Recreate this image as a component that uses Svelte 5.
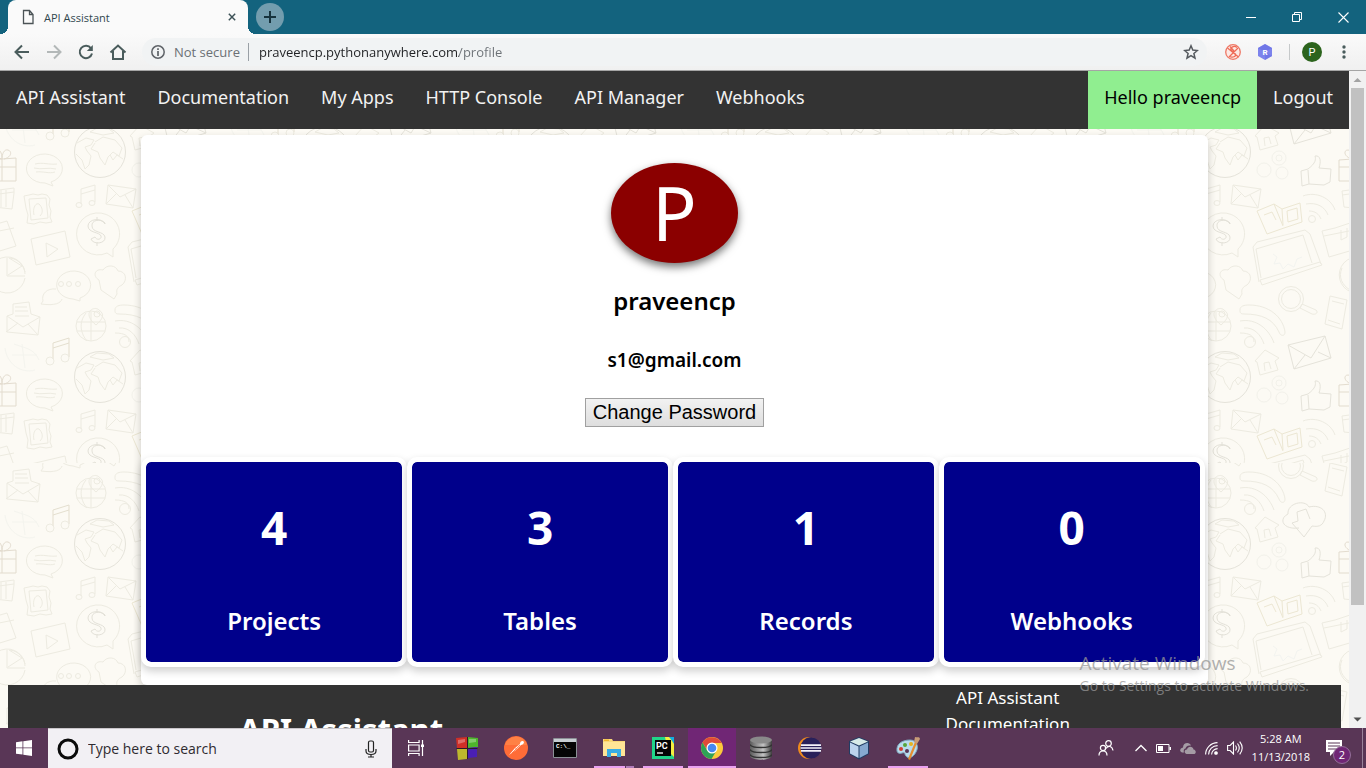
<script>
  const navLinks = ['API Assistant', 'Documentation', 'My Apps', 'HTTP Console', 'API Manager', 'Webhooks'];
  const stats = [
    { value: 4, label: 'Projects' },
    { value: 3, label: 'Tables' },
    { value: 1, label: 'Records' },
    { value: 0, label: 'Webhooks' }
  ];
  const footerLinks = ['API Assistant', 'Documentation'];
  const copies = [[0, 0], [-225, 0], [225, 0], [0, -225], [0, 225], [-225, -225], [225, -225]];
</script>

<div class="screen">
  <header class="tabs">
    <div class="tab">
      <svg class="doc" width="12" height="16" viewBox="0 0 12 16"><path d="M1.5 1.5h6l3.5 4v9H1.500z M7.500 1.500v4H11" fill="none" stroke="#4b5356" stroke-width="1.300"/></svg>
      <span>API Assistant</span>
      <button aria-label="Close tab"><svg width="8" height="8" viewBox="0 0 10 10"><path d="M1 1l8 8M9 1L1 9" stroke="#3c5156" stroke-width="1.800"/></svg></button>
      <i class="flare left"></i><i class="flare right"></i>
    </div>
    <button class="new-tab" aria-label="New tab"><svg width="12" height="12" viewBox="0 0 12 12"><path d="M6 0v12M0 6h12" stroke="#17333d" stroke-width="2"/></svg></button>
    <div class="window-buttons">
      <button aria-label="Minimize"><svg width="11" height="11" viewBox="0 0 11 11"><path d="M0 5.500h10" stroke="#fff"/></svg></button>
      <button aria-label="Restore"><svg width="11" height="11" viewBox="0 0 11 11"><path d="M.5 2.500h7v7h-7zM2.500 2.500v-2h7v7h-2" fill="none" stroke="#fff"/></svg></button>
      <button aria-label="Close"><svg width="11" height="11" viewBox="0 0 11 11"><path d="M.5.5l10 10M10.500.5l-10 10" stroke="#fff" stroke-width="1.100"/></svg></button>
    </div>
  </header>

  <div class="toolbar">
    <div class="tools">
      <button aria-label="Back"><svg width="16" height="16" viewBox="0 0 16 16"><path d="M15 8H2M8 1.500L1.500 8 8 14.500" fill="none" stroke="#4a5c5c" stroke-width="2"/></svg></button>
      <button aria-label="Forward"><svg width="16" height="16" viewBox="0 0 16 16"><path d="M1 8h13M8 1.500L14.500 8 8 14.500" fill="none" stroke="#b3b8b8" stroke-width="2"/></svg></button>
      <button aria-label="Reload"><svg width="16" height="16" viewBox="0 0 16 16"><path d="M13 4.300A6.200 6.200 0 1 0 14 9.500" fill="none" stroke="#4a5c5c" stroke-width="2"/><path d="M14.800 1v6H8.800z" fill="#4a5c5c"/></svg></button>
      <button aria-label="Home"><svg width="18" height="16" viewBox="0 0 18 16"><path d="M1.500 8.500L9 1.500l7.500 7M4 7v8h10V7" fill="none" stroke="#4a5c5c" stroke-width="2"/></svg></button>
    </div>
    <div class="address">
      <svg width="14" height="14" viewBox="0 0 14 14"><circle cx="7" cy="7" r="6.200" fill="none" stroke="#5f6368" stroke-width="1.500"/><path d="M7 6v5M7 3.200v1.700" stroke="#5f6368" stroke-width="1.700"/></svg>
      <label for="url">Not secure</label>
      <input id="url" value="praveencp.pythonanywhere.com/profile" />
      <button aria-label="Bookmark"><svg width="16" height="16" viewBox="0 0 16 16"><path d="M8 1.800l1.800 4.300 4.600.4-3.500 3 1.100 4.600L8 11.600l-4 2.500 1.100-4.600-3.500-3 4.600-.4z" fill="none" stroke="#54595e" stroke-width="1.500"/></svg></button>
    </div>
    <div class="extensions">
      <button aria-label="Similar sites"><svg width="16" height="16" viewBox="0 0 16 16"><circle cx="8" cy="8" r="7.300" fill="#fde9e4" stroke="#ee7866" stroke-width="1.300"/><path d="M12 3.500C9 1 5 3.500 6 6l4.500 4c1 2.500-3 4-6 2.500M2.500 4l11 9M13 4L4 13M5 2.500L9 7" fill="none" stroke="#ee6b57" stroke-width="1.200"/></svg></button>
      <button aria-label="Extension R"><svg width="16" height="16" viewBox="0 0 16 16"><path d="M8 0l7 4v8l-7 4-7-4V4z" fill="#7c83ec"/><path d="M8 0l7 4-7 4-7-4zM8 8l7 4-7 4z" fill="#6970e4" opacity=".6"/><text x="8" y="11" text-anchor="middle" font-family="Roboto" font-size="8" font-weight="700" fill="#fff">R</text></svg></button>
      <i></i>
      <button class="profile">P</button>
      <button aria-label="Menu"><svg width="4" height="14" viewBox="0 0 4 14" fill="#4a5c5c"><circle cx="2" cy="2" r="1.700"/><circle cx="2" cy="7" r="1.700"/><circle cx="2" cy="12" r="1.700"/></svg></button>
    </div>
  </div>

  <div class="viewport">
    <div class="page">
      <svg class="wallpaper" width="100%" height="100%" aria-hidden="true">
        <defs>
          <g id="doodles" fill="none" stroke="#edebe1" stroke-width="1">
            <path d="M-11 32l27-2v23h-27zM-11 39H16M2 31v22M2 31c-8-2-9-9-4-9 3 0 4 5 4 9 0-5 2-10 6-9s4 7-4 9" stroke="#e3dccf"/>
            <path d="M-8 63l22-3v5l-2 16-18-2zM-8 67l22-3M1 62v17M6 62v17"/>
            <path d="M51 54a18 14.500 0 1 0-6 1l8 3z"/><path d="M35 36c8-2 14 1 22 0M34 40c8 2 14-1 22 1M36 44c7-1 13 2 19 0"/>
            <circle cx="100" cy="24" r="25.500" stroke="#e5e3da"/>
            <path d="M77 15l9-5 8 2-3 5-6 2 2 4 4 5-2 9-4 4-3-9-6-6M95 14l8-5 12 3 7 8-3 8-6-4-5 5-3 8-5-7-2-6-7-3 4-6M90 4l7-4 12 1 5 4-11 2zM110 27l3 5 4-5 6 4"/>
            <path d="M81 76V61l14-4v17M81 66l14-4" /><ellipse cx="79" cy="77" rx="3" ry="2.500"/><ellipse cx="92" cy="75" rx="3" ry="2.500"/>
            <path d="M108 57l28 4-3 19-27-4zM108 57l12 12 16-8M106 76l10-10M133 80l-8-13"/>
            <path d="M24 68l5-1 4-1 5 1 4-1 5 1 3 4-1 6 2 6-1 6 2 5-6 1-6-1-6 2-7-1 1-8-2-7z M29 71l17-1 2 20-17 2zM34 87c-2-8 3-14 6-10s3 8 0 11"/>
            <path d="M107 125a21.500 21 0 1 1 6-4l0 8z"/>
            <path d="M105 95c-4-5-14-3-13 3 0 7 12 5 13 11 1 7-12 8-14 2l4-2c2 4 7 2 6-1-1-4-13-3-13-10s13-9 17-2zM97 89v4M97 114v4" stroke="#e3e1d8"/>
            <path d="M31 111l34-8 5 26-34 8zM46 115l1 14 11-8z"/>
            <path d="M80 170a17 14 0 1 0-7 1l7 2z M56 161c-9-1-15 5-13 12l-2 3c14 2 20-1 21-5"/>
            <circle cx="61" cy="156" r="2.500"/><circle cx="69" cy="156" r="2.500"/><circle cx="78" cy="156" r="2.500"/>
            <path d="M101 162l-2-10c-7-4-4-12 4-10 4-6 13-5 15 1 8 0 10 9 4 14-4 2-6 4-5 9l-3 5z"/>
            <path d="M25 144a18 18 0 1 0 0 6M7 130v18h18M9 130l13 8-14 9M10 130c9 1 15 9 15 16"/>
            <path d="M7 188l6-2V176l16-2 2 12 9 3-2 18-31-3zM7 188l16 11 17-10M6 204l12-9M38 207l-10-11M15 179h12M15 183h13M15 188h14"/>
            <circle cx="91" cy="198" r="15"/><path d="M77 194h28M77 203h28M91 184v29M86 185c-8 10-5 21 1 28M96 197c-15-12-2-20 3-15 6 4 4 9-3 15z"/><circle cx="97" cy="186" r="3"/>
            <path d="M115 182c0-4 4-5 9-5 20 0 34 12 36 27 0 5-5 4-6 0-6-13-17-18-35-18-4 0-4-2-4-4zM115 193c16-3 29 8 34 22M119 200c10-1 17 7 20 16M115 205c10 0 14 3 14 9"/><circle cx="125" cy="214" r="5.500"/>
            <path d="M53 231v-16l16-5v19M53 220l16-5" stroke="#e4dfcf"/><ellipse cx="50" cy="233" rx="4" ry="4"/><ellipse cx="65" cy="230" rx="4" ry="4"/>
            <path d="M5 220c2 16 16 26 30 22M14 216c10 4 20 4 25 16M12 227h25M22 216l3 24" stroke="#f4f4ee"/>
            <path d="M130 8l10-11 14 8-4 3 3 9-18 5-3-13zM140 18l-1-8 5-1 2 7"/>
            <g stroke="#f2f1ea"><circle cx="139" cy="42" r="7"/><circle cx="154" cy="30" r="7"/><circle cx="157" cy="45" r="6"/><circle cx="154" cy="30" r="3"/></g>
            <path d="M176 43l7-2c8-6 8-10 7-13 6-1 6 6 4 12l12 1-1 13-6 3-15-1-7 2z M183 42l1 14" stroke="#e5e3da"/>
            <path d="M132 83l17-7 8 5 18-6 2 19-18 6-17 6zM149 76l9 22M157 81l1 16M139 87l8-3 4 8M162 83l10-3 1 11-10 3z" stroke="#ece7d3"/>
            <path d="M178 68c13-5 28 2 32 14M181 76c11-2 19 3 22 11M184 83c6 0 10 3 12 8"/><circle cx="187" cy="91" r="3.500"/>
            <path d="M134 154l-6-35 4-5 48-12 5 4 11 30M136 150l-5-29 47-14 9 28M135 152l60-18 2 3-60 20z"/>
            <path d="M148 126l4 3-3 7 6-1 3 6 5-5 6 3 3-8 5-2" stroke="#f3f4f0"/>
            <path d="M197 103l13-3 15-5 7-2 9 25-13 4-24 7zM199 108l40-8M216 102v10l6-3v-9"/>
            <circle cx="166" cy="171" r="12.500"/><circle cx="166" cy="171" r="9.500"/><path d="M177 176l14 6c3 3-1 5-4 4l-12-6z"/>
            <path d="M205 168l17 4-5 29-17-5zM207 173l12 3M203 192l12 4"/>
            <path d="M217 140c-4 9 0 17 8 22"/>
          </g>
          <g id="letter" fill="none" stroke="#e5e3da"><path d="M163 217l37-9 6 22-37 11zM163 217l23 13 14-22M169 241l11-14M206 230l-13-6"/></g>
          <g id="cloud" fill="none" stroke="#e5e3da"><path d="M174 233c-16 2-21-9-11-14-1-11 17-15 21-7 12-3 20 5 15 14-2 5-6 6-12 5l-8 11-12-14 6-2-1-9 9-3 4 10"/></g>
          <pattern id="upper" y="57" width="225" height="225" patternUnits="userSpaceOnUse">
            <rect width="225" height="225" fill="#fcfaf4"/>
            {#each copies as [x, y]}<use href="#doodles" {x} {y}/><use href="#letter" {x} {y}/>{/each}
          </pattern>
          <pattern id="lower" y="224" width="225" height="225" patternUnits="userSpaceOnUse">
            <rect width="225" height="225" fill="#fcfaf4"/>
            {#each copies as [x, y]}<use href="#doodles" {x} {y}/><use href="#cloud" {x} {y}/>{/each}
          </pattern>
        </defs>
        <rect width="100%" height="392" fill="url(#upper)"/>
        <rect y="392" width="100%" height="100%" fill="url(#lower)"/>
      </svg>

      <nav>
        {#each navLinks as link}<a href="#top">{link}</a>{/each}
        <a class="hello" href="#profile">Hello praveencp</a>
        <a href="#logout">Logout</a>
      </nav>

      <div class="body">
        <main>
          <div class="avatar">P</div>
          <h2>praveencp</h2>
          <h3>s1@gmail.com</h3>
          <button class="change">Change Password</button>
          <div class="stats">
            {#each stats as stat}
              <section><strong>{stat.value}</strong><span>{stat.label}</span></section>
            {/each}
          </div>
        </main>
        <footer>
          <h1>API Assistant</h1>
          <div class="links">
            {#each footerLinks as link}<a href="#top">{link}</a>{/each}
          </div>
        </footer>
      </div>
    </div>
    <div class="scrollbar">
      <svg width="17" height="17" viewBox="0 0 17 17"><path d="M4.500 11h8l-4-4z" fill="#a3a3a3"/></svg>
      <div class="track"><div class="thumb"></div></div>
      <svg width="17" height="17" viewBox="0 0 17 17"><path d="M4.500 6.500h8l-4 4z" fill="#505050"/></svg>
    </div>
    <div class="watermark"><p>Activate Windows</p><small>Go to Settings to activate Windows.</small></div>
  </div>

  <div class="taskbar">
    <button class="start" aria-label="Start"><svg width="16" height="16" viewBox="0 0 16 16" fill="#fff"><path d="M0 2.200l6.500-.9v6.200H0zM7.300 1.200L16 0v7.500H7.300zM0 8.300h6.500v6.300L0 13.700zM7.300 8.300H16V16l-8.700-1.300z"/></svg></button>
    <div class="search">
      <svg width="22" height="22" viewBox="0 0 22 22"><circle cx="11" cy="11" r="9" fill="none" stroke="#0b0b0b" stroke-width="3"/></svg>
      <input aria-label="Search" placeholder="Type here to search" />
      <svg width="12" height="18" viewBox="0 0 12 18" fill="none" stroke="#222" stroke-width="1.200"><rect x="3.500" y="1" width="5" height="11" rx="1.500"/><path d="M1 9v2q0 3.500 5 3.500T11 11V9M6 14.500V17M3 17h6"/></svg>
    </div>
    <div class="apps">
      <button class="view" aria-label="Task view"><svg width="17" height="16" viewBox="0 0 17 16" fill="none" stroke="#fff" stroke-width="1.200"><path d="M.6 0v2.500h10.500V0M.6 16v-2.500h10.500V16M.6 5h10.500v6H.6zM14.500 0v16"/><path d="M13 4.500h3v2.500h-3z" fill="#fff" stroke="none"/></svg></button>
      <button aria-label="Panes"><svg width="24" height="24" viewBox="0 0 24 24"><path d="M1 2l11-1v11H2z" fill="#cf2f27"/><path d="M13 1l10 1v9l-10 1z" fill="#4eb52c"/><path d="M2 13h10v10l-9 1z" fill="#bdb82e"/><path d="M13 12l9-1v10l-9 1z" fill="#4a1fb5"/><path d="M3 4l7-1v3l-7 2zM14 3h7v3l-7 1z" fill="#fff" opacity=".3"/><path d="M12.500 1v22M1.500 12.500h21" stroke="#2b1a2b"/></svg></button>
      <button aria-label="Postman"><svg width="24" height="24" viewBox="0 0 24 24"><circle cx="12" cy="12" r="12" fill="#ff6c37"/><path d="M1 9a11.500 11.500 0 0 1 22 0z" fill="#ff8a4c" opacity=".7"/><path d="M5 19l6-7 5-4c0-3 3-4 4-2 0 2-2 3-3 3l-5 5z" fill="#fff"/><path d="M8 17l8-8M11 11.500l2.500 2.500" stroke="#ff6c37" stroke-width=".8"/></svg></button>
      <button aria-label="Command prompt"><svg width="24" height="20" viewBox="0 0 24 20"><path d="M.5.5h23v19H.5z" fill="#050505" stroke="#8b9095"/><path d="M1 1h22v3H1z" fill="#c8ced3"/><text x="3" y="10" font-family="Liberation Mono" font-size="6" font-weight="700" fill="#fff">C:\_</text></svg></button>
      <button class="open two" aria-label="File Explorer"><svg width="22" height="20" viewBox="0 0 22 20"><path d="M0 1h9l1 2h12v15H0z" fill="#f9d878"/><path d="M0 4h22v14H0z" fill="#ffe596"/><path d="M4 11h14v8h-4v-4H8v4H4z" fill="#38ace4"/><path d="M1 1.500h5v1.500H1z" fill="#f1b52d"/></svg></button>
      <button class="open" aria-label="PyCharm"><svg width="22" height="22" viewBox="0 0 22 22"><path d="M0 0h22v22H0z" fill="#20d589"/><path d="M13 0h9v9z" fill="#12aee0"/><path d="M13 0h5l4 7v13l-6-6z" fill="#f5ee3f"/><path d="M17 0h5v6z" fill="#12aee0"/><path d="M3 3h16v16H3z" fill="#050505"/><text x="4" y="12" font-family="Roboto" font-size="9" font-weight="700" fill="#fff">PC</text><path d="M5 16h6" stroke="#fff" stroke-width="1.300"/></svg></button>
      <button class="open active" aria-label="Chrome"><svg width="22" height="22" viewBox="0 0 22 22"><circle cx="11" cy="11" r="11" fill="#fbc93c"/><path d="M1.500 5.500A11 11 0 0 1 20.600 6H11L6.500 13.500z" fill="#df4a3a"/><path d="M1.500 5.500A11 11 0 0 0 10.500 22L15.500 13.500H6.200z" fill="#2ea257"/><circle cx="11" cy="11" r="5.500" fill="#fff"/><circle cx="11" cy="11" r="4.300" fill="#4688f1"/></svg></button>
      <button aria-label="Database"><svg width="22" height="24" viewBox="0 0 22 24"><defs><linearGradient id="steel"><stop stop-color="#5b5b5b"/><stop offset=".6" stop-color="#c4c4c4"/><stop offset="1" stop-color="#3d3d3d"/></linearGradient></defs><path d="M0 4v16c1 5 21 5 22 0V4z" fill="url(#steel)"/><ellipse cx="11" cy="4" rx="11" ry="3.500" fill="#8a8a8a"/><path d="M0 8.500c2 4 20 4 22 0M0 13.500c2 4 20 4 22 0M0 18.500c2 4 20 4 22 0" fill="none" stroke="#333" stroke-width="1.400"/></svg></button>
      <button aria-label="Eclipse"><svg width="24" height="22" viewBox="0 0 24 22"><circle cx="11" cy="11" r="11" fill="#f08b1c"/><circle cx="13.500" cy="11" r="11" fill="#593656"/><circle cx="13" cy="11" r="10.500" fill="#29215b"/><path d="M3 8.200h20M2.500 11h21M3 13.800h20" stroke="#f4f2fb" stroke-width="1.700"/></svg></button>
      <button aria-label="NetBeans"><svg width="24" height="24" viewBox="0 0 24 24"><path d="M12 1l10 4v13l-10 5.500L2 18V5z" fill="#213c63"/><path d="M12 2l9 3.500-9 4-9-4z" fill="#d7ebe9"/><path d="M3 6.500l8.500 4v11.500L3 17.500z" fill="#bcd4ee"/><path d="M21 6.500l-8.500 4v11.500l8.500-4.500z" fill="#86a9d0"/></svg></button>
      <button class="open" aria-label="Paint"><svg width="24" height="24" viewBox="0 0 24 24"><path d="M1 15C0 8 6 4 14 4c7 0 9 7 6 12-3 6-8 7-10 4-2-2 0-4-4-3-2 1-5 0-5-2z" fill="#b9dcec" stroke="#7fa9c0"/><circle cx="5" cy="13" r="2" fill="#d23f32"/><circle cx="9" cy="9" r="2" fill="#57a63a"/><circle cx="15" cy="8" r="2" fill="#e6b320"/><circle cx="11" cy="15" r="2" fill="#593656"/><path d="M12 23l7-17 2 1-7 17z" fill="#e58e2f"/><path d="M18 6l1-5c3 1 4-1 5 2l-3 5z" fill="#c79c77"/></svg></button>
    </div>
    <div class="tray">
      <button aria-label="People"><svg width="16" height="16" viewBox="0 0 16 16" fill="none" stroke="#fff" stroke-width="1.200"><circle cx="10.500" cy="3.500" r="2.800"/><circle cx="5" cy="8" r="2.600"/><path d="M8 8.500c2-3 6-3 7 2M1 15.500c0-6 8-6 8 0"/></svg></button>
      <button aria-label="Hidden icons"><svg width="12" height="8" viewBox="0 0 12 8"><path d="M.5 7L6 1.500 11.500 7" fill="none" stroke="#fff" stroke-width="1.300"/></svg></button>
      <svg width="15" height="9" viewBox="0 0 15 9"><path d="M.5.5h12.500v8H.5z" fill="none" stroke="#fff"/><path d="M2 2h5v5H2zM13.500 3H15v3h-1.500z" fill="#fff"/></svg>
      <svg width="16" height="11" viewBox="0 0 16 11" fill="#a59ca5"><path d="M2 9.500C-1 8.500 0 5 3 4.500 3-1 10-1 11 2.500 7 2 6 4 5.500 5.500 3.500 6 3.500 8 4 9.500z"/><path d="M6.500 11c-3-1-2-5 .5-4.500C8 2.500 13 3 13.500 6.500c3 .5 3 4.500 0 4.500z"/></svg>
      <svg width="13" height="13" viewBox="0 0 13 13" fill="none" stroke="#fff" stroke-width="1.100"><path d="M.6 12.500A12 12 0 0 1 12.500.6M3.600 12.500a9 9 0 0 1 9-8.900M6.600 12.500a6 6 0 0 1 6-5.900"/><circle cx="11" cy="11" r="1.300" fill="#fff"/></svg>
      <svg width="16" height="14" viewBox="0 0 16 14" fill="none" stroke="#fff" stroke-width="1.100"><path d="M.6 4.500h2.500L6.500 1v12L3.100 9.500H.6zM8.500 4.500q1.800 2.500 0 5M10.500 2.500q3.500 4.500 0 9M12.700.6q5 6.400 0 12.800"/></svg>
      <time><span>5:28 AM</span><span>11/13/2018</span></time>
      <button class="notes" aria-label="Notifications"><svg width="16" height="16" viewBox="0 0 16 16"><path d="M0 0h16v12H8l-4 4v-4H0z" fill="#fff"/><path d="M2 3h12M2 6h12M2 9h8" stroke="#593656"/></svg><b>2</b></button>
    </div>
  </div>
</div>

<style>
  :global(body) { margin: 0; }
  .screen { height: 100vh; display: flex; flex-direction: column; overflow: hidden; font-family: "Open Sans", sans-serif; }
  button { border: 0; padding: 0; background: none; font: inherit; display: flex; align-items: center; justify-content: center; }
  svg { display: block; flex: none; }
  a { text-decoration: none; color: inherit; }

  .tabs { flex: none; height: 34px; background: #13637e; display: flex; align-items: center; padding-left: 8px; }
  .tab { position: relative; box-sizing: border-box; width: 240px; height: 34px; background: #fafafa; border-radius: 8px 8px 0 0; display: flex; align-items: center; padding: 0 10px 0 14px; gap: 10px; font-size: 11px; color: #31474e; }
  .tab button { margin-left: auto; width: 12px; height: 12px; }
  .flare { position: absolute; bottom: 0; width: 8px; height: 8px; }
  .left { left: -8px; background: radial-gradient(circle at 0 0, transparent 8px, #fafafa 8px); }
  .right { right: -8px; background: radial-gradient(circle at 100% 0, transparent 8px, #fafafa 8px); }
  .new-tab { width: 28px; height: 28px; margin-left: 8px; border-radius: 50%; background: #739dae; }
  .window-buttons { margin-left: auto; display: flex; height: 28px; }
  .window-buttons button { width: 46px; }

  .toolbar { flex: none; box-sizing: border-box; height: 37px; display: flex; align-items: center; background: linear-gradient(#fafafa, #f0f0f0); border-bottom: 1px solid #a5a5a5; }
  .tools { display: flex; padding: 0 2px 0 6px; }
  .tools button { width: 32px; height: 28px; }
  .address { flex: 1; height: 28px; margin-left: 6px; padding: 0 8px 0 9px; display: flex; align-items: center; border-radius: 14px; background: #f1f3f4; font-size: 13px; color: #6b7075; }
  .address label { padding: 0 8px 0 9px; line-height: 18px; }
  .address input { flex: 1; border: 0; border-left: 1px solid #9aa0a6; outline: 0; padding: 0 0 0 10px; height: 18px; font: inherit; color: transparent; background: linear-gradient(90deg, #202124 210px, #6b7075 210px); -webkit-background-clip: text; background-clip: text; }
  .extensions { display: flex; align-items: center; padding-right: 10px; }
  .extensions button { width: 32px; height: 28px; }
  .extensions i { width: 1px; height: 16px; background: #c6c9ca; margin: 0 12px 0 8px; }
  .extensions .profile { width: 20px; height: 20px; margin-right: 10px; border-radius: 50%; background: #2c641d; color: #fff; font: 11px Roboto, sans-serif; }
  .extensions button:first-child { margin-left: 10px; }
  .extensions button:last-child { width: 24px; }

  .viewport { position: relative; flex: 1; min-height: 0; display: flex; }
  .page { position: relative; flex: 1; min-width: 0; overflow: hidden; font-family: "Noto Sans", sans-serif; }
  .wallpaper { position: absolute; inset: 0; }
  nav { position: relative; display: flex; background: #333; color: #f2f2f2; font-size: 18px; line-height: 24px; }
  nav a { padding: 14px 16px 20px; white-space: nowrap; }
  nav .hello { margin-left: auto; background: #90ee90; color: #000; }
  .body { position: relative; padding: 6px 8px 0; }
  main { box-sizing: border-box; width: 80%; margin: 0 auto; padding: 28px 0 18px; display: flex; flex-direction: column; align-items: center; border-radius: 6px; background: #fff; box-shadow: 0 4px 8px rgba(0, 0, 0, .2); }
  .avatar { width: 127px; height: 100px; border-radius: 50%; background: #8b0000; color: #fff; font-size: 74px; line-height: 100px; text-align: center; box-shadow: 0 4px 8px rgba(0, 0, 0, .55); }
  h2 { margin: 21px 0 28px; font-size: 24px; line-height: 34px; font-weight: 600; }
  h3 { margin: 0 0 24px; font-size: 19px; line-height: 28px; font-weight: 600; }
  .change { box-sizing: border-box; height: 29px; padding: 0 7px; border: 1px solid #a0a0a0; background: linear-gradient(#f2f2f2, #dedede); font: 20px "Liberation Sans", sans-serif; color: #000; }
  .stats { box-sizing: border-box; width: 100%; margin-top: 30px; padding-right: 3px; display: grid; grid-template-columns: repeat(4, 1fr); }
  section { border: 5px solid #fff; border-radius: 10px; background: #00008b; background-clip: padding-box; box-shadow: 0 4px 8px rgba(0, 0, 0, .2); color: #fff; display: flex; flex-direction: column; align-items: center; padding: 35px 0 24px; }
  strong { font-size: 46px; line-height: 60px; font-weight: 700; }
  section span { margin-top: 47px; font-size: 24px; line-height: 34px; font-weight: 600; }
  footer { display: grid; grid-template-columns: 1fr 1fr; background: #333; color: #fff; text-align: center; height: 300px; }
  h1 { margin: 20px 0 0; font-size: 31px; line-height: 48px; font-weight: 700; }
  .links { display: flex; flex-direction: column; font-size: 17px; line-height: 26px; }

  .scrollbar { width: 17px; display: flex; flex-direction: column; background: #f1f1f1; }
  .track { flex: 1; padding: 0 2px; }
  .thumb { height: 83%; background: #c1c1c1; }
  .watermark { position: absolute; right: 57px; bottom: 32px; color: rgba(150, 150, 150, .75); }
  .watermark p { margin: 0; font-size: 19px; line-height: 26px; }
  .watermark small { display: block; font-size: 14px; line-height: 20px; }

  .taskbar { flex: none; height: 40px; display: flex; background: #593656; color: #fff; }
  .start { width: 48px; }
  .search { box-sizing: border-box; width: 344px; padding: 0 15px 0 9px; display: flex; align-items: center; background: #f2f0f4; border-top: 1px solid #c9c5ca; }
  .search input { flex: 1; min-width: 0; border: 0; outline: 0; background: none; padding: 0 0 0 9px; font: 14px "Open Sans", sans-serif; }
  .search input::placeholder { color: #2f2b30; opacity: 1; }
  .apps { display: flex; gap: 1px; }
  .apps button { position: relative; width: 48px; }
  .apps .view { margin-right: 2px; }
  .apps .open::after { content: ""; position: absolute; left: 4px; right: 4px; bottom: 0; height: 2px; background: #e9a1f0; }
  .apps .two::after { background: linear-gradient(90deg, #e9a1f0 31px, #593656 31px, #593656 32px, #b07cb8 32px); }
  .apps .active { background: #702675; }
  .apps .active::after { left: 0; right: 0; }
  .tray { margin-left: auto; display: flex; align-items: center; gap: 9px; padding-right: 3px; }
  .tray button:first-child { margin-right: 12px; }
  time { display: flex; flex-direction: column; align-items: center; font-size: 11px; line-height: 18px; }
  .tray .notes { position: relative; align-self: stretch; box-sizing: border-box; width: 44px; padding-right: 14px; border-right: 1px solid #99839a; }
  .notes b { position: absolute; left: 14px; top: 18px; width: 16px; height: 16px; border-radius: 50%; background: #702675; border: 1px solid #94709a; color: #fff; font-size: 11px; line-height: 16px; font-weight: 400; }
</style>
